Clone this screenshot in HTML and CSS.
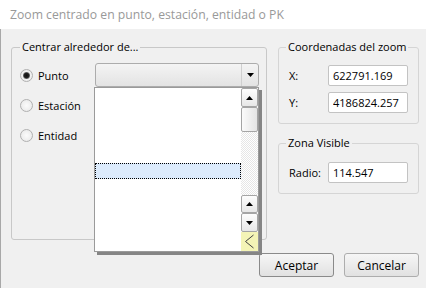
FILE: index.html
```html
<!DOCTYPE html>
<html lang="es">
<head>
    <meta charset="UTF-8">
    <meta name="viewport" content="width=device-width, initial-scale=1.0">
    <title>Zoom centrado</title>
    <link rel="stylesheet" href="styles.css">
</head>
<body>
    <div class="window">
        <div class="titlebar">Zoom centrado en punto, estación, entidad o PK</div>
        <div class="client">
            <div class="panels">
                <fieldset class="group group-center">
                    <legend>Centrar alrededor de...</legend>
                    <div class="option">
                        <span class="radio checked"></span>
                        <span class="option-label">Punto</span>
                        <div class="combo">
                            <span class="combo-value"></span>
                            <span class="combo-button">
                                <svg width="7" height="4" viewBox="0 0 7 4"><polygon points="0,0 7,0 3.5,4" fill="#000"/></svg>
                            </span>
                        </div>
                    </div>
                    <div class="option">
                        <span class="radio"></span>
                        <span class="option-label">Estación</span>
                    </div>
                    <div class="option">
                        <span class="radio"></span>
                        <span class="option-label">Entidad</span>
                    </div>
                </fieldset>
                <div class="side">
                    <fieldset class="group">
                        <legend>Coordenadas del zoom</legend>
                        <div class="field">
                            <label for="coordX">X:</label>
                            <input type="text" id="coordX" value="622791.169">
                        </div>
                        <div class="field">
                            <label for="coordY">Y:</label>
                            <input type="text" id="coordY" value="4186824.257">
                        </div>
                    </fieldset>
                    <fieldset class="group group-zone">
                        <legend>Zona Visible</legend>
                        <div class="field">
                            <label for="radio">Radio:</label>
                            <input type="text" id="radio" value="114.547">
                        </div>
                    </fieldset>
                </div>
            </div>
            <div class="buttons">
                <button class="default">Aceptar</button>
                <button>Cancelar</button>
            </div>

            <!-- open combo list -->
            <div class="dropdown">
                <div class="items">
                    <div class="item selected"></div>
                </div>
                <div class="scrollbar">
                    <div class="sb-button sb-up">
                        <svg width="7" height="4" viewBox="0 0 7 4"><polygon points="3.5,0 7,4 0,4" fill="#000"/></svg>
                    </div>
                    <div class="sb-thumb"></div>
                    <div class="sb-track"></div>
                    <div class="sb-button sb-up small">
                        <svg width="7" height="4" viewBox="0 0 7 4"><polygon points="3.5,0 7,4 0,4" fill="#000"/></svg>
                    </div>
                    <div class="sb-button sb-down">
                        <svg width="7" height="4" viewBox="0 0 7 4"><polygon points="0,0 7,0 3.5,4" fill="#000"/></svg>
                    </div>
                    <div class="sb-grip">
                        <svg width="17" height="19" viewBox="0 0 17 19"><polyline points="12.5,3 4.5,9.5 12.5,16" fill="none" stroke="#444" stroke-width="1"/></svg>
                    </div>
                </div>
            </div>
        </div>
    </div>
</body>
</html>
```

FILE: styles.css
```css
body {
    margin: 0;
    font-family: "Open Sans", "Noto Sans", sans-serif;
    font-size: 11px;
    color: #000;
    background: #f0f0f0;
    overflow: hidden;
}
.window {
    width: 426px;
    height: 288px;
}
.titlebar {
    height: 29px;
    line-height: 29px;
    padding-left: 10px;
    background: #fff;
    color: #999;
    font-size: 12.2px;
}
.client {
    position: relative;
    height: 259px;
    box-sizing: border-box;
    border-left: 1px solid #a8a8a8;
    padding: 10px 7px 0 10px;
}
.panels {
    display: flex;
    gap: 11px;
}
.group {
    margin: 0;
    padding: 0;
    border: 1px solid #d5d5d5;
    border-radius: 3px;
    min-width: 0;
}
.group legend {
    margin-left: 7px;
    padding: 0 2px;
    line-height: 16px;
    white-space: nowrap;
}
.group-center {
    width: 256px;
    height: 201px;
    box-sizing: border-box;
    padding: 5px 7px 0 8px;
    border-color: #c8c8c8;
}
.group-center legend {
    margin-left: 0;
}
.option {
    display: flex;
    align-items: center;
    height: 30px;
}
.radio {
    position: relative;
    width: 11px;
    height: 11px;
    border: 1px solid #b0b0b0;
    border-radius: 50%;
    background: radial-gradient(circle at 50% 50%, #fbfbfb 0%, #e6e6e6 100%);
}
.radio.checked::after {
    content: "";
    position: absolute;
    left: 2px;
    top: 2px;
    width: 7px;
    height: 7px;
    border-radius: 50%;
    background: radial-gradient(circle, #111 0%, #222 45%, #8a8a8a 75%, #d0d0d0 100%);
}
.option-label {
    margin-left: 5px;
}
.combo {
    display: flex;
    margin-left: auto;
    width: 164px;
    height: 24px;
    box-sizing: border-box;
    border: 1px solid #acacac;
    border-radius: 3px;
    background: linear-gradient(#f4f4f4, #e3e3e3);
}
.combo-value {
    flex: 1;
}
.combo-button {
    display: flex;
    align-items: center;
    justify-content: center;
    width: 16px;
    border-left: 1px solid #cfcfcf;
}
.side {
    display: flex;
    flex-direction: column;
    width: 141px;
}
.side .group {
    padding: 10px 0;
}
.group-zone {
    margin-top: 11px;
}
.group-zone.group {
    padding-top: 11px;
}
.field {
    display: flex;
    align-items: center;
    padding-left: 10px;
}
.field + .field {
    margin-top: 6px;
}
.field label {
    width: 39px;
}
.field input {
    width: 80px;
    height: 21px;
    box-sizing: border-box;
    border: 1px solid #c3c3c3;
    border-radius: 2px;
    padding: 0 4px;
    font: inherit;
    color: #000;
    background: #fff;
}
.buttons {
    display: flex;
    justify-content: flex-end;
    gap: 10px;
    margin-top: 13px;
}
.buttons button {
    width: 75px;
    height: 24px;
    border: 1px solid #adadad;
    border-radius: 3px;
    background: linear-gradient(#f6f6f6, #e1e1e1);
    font: inherit;
    font-size: 12px;
    color: #000;
    padding: 0;
}
.buttons button.default {
    border-color: #8a8a8a;
}
.dropdown {
    position: absolute;
    left: 93px;
    top: 58px;
    z-index: 2;
    display: flex;
    width: 165px;
    height: 165px;
    box-sizing: border-box;
    border: 1px solid #9a9a9a;
    background: #fff;
    box-shadow: 3px 3px 0 #858585;
}
.items {
    flex: 1;
}
.item.selected {
    margin-top: 75px;
    height: 16px;
    box-sizing: border-box;
    border: 1px dotted #000;
    background: #dcebfc;
}
.scrollbar {
    display: flex;
    flex-direction: column;
    width: 17px;
}
.sb-button {
    display: flex;
    align-items: center;
    justify-content: center;
    height: 19px;
    box-sizing: border-box;
    border: 1px solid #a5a5a5;
    border-radius: 2px;
    background: linear-gradient(#fdfdfd, #e7e7e7);
}
.sb-button.small {
    height: 18px;
}
.sb-thumb {
    height: 25px;
    box-sizing: border-box;
    border: 1px solid #a5a5a5;
    border-radius: 2px;
    background: linear-gradient(90deg, #fbfbfb, #e4e4e4);
}
.sb-track {
    flex: 1;
    background: repeating-conic-gradient(#e6e6e6 0 25%, #fff 0 50%) 0 0 / 2px 2px;
}
.sb-grip {
    height: 19px;
    background: #f4f4b6;
}
.sb-grip svg {
    display: block;
}
```
